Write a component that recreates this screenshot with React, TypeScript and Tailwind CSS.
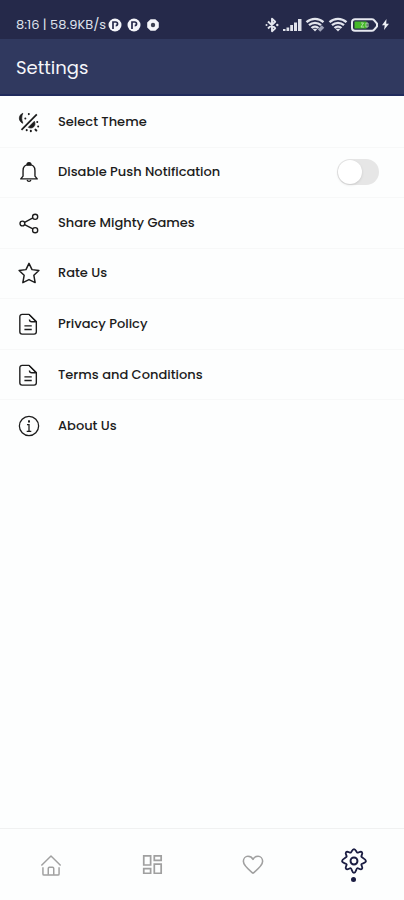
import React from 'react';

type IconProps = { className?: string };

const StatusBadge: React.FC<IconProps> = ({ className }) => (
  <svg viewBox="0 0 14 14" className={className} aria-hidden="true">
    <circle cx="7" cy="7" r="6.500" fill="#f4f5fa" />
    <path d="M5 11V4h2.700a1.800 1.800 0 0 1 0 3.700" fill="none" stroke="#25294a" strokeWidth="1.700" />
  </svg>
);

const StatusDot: React.FC<IconProps> = ({ className }) => (
  <svg viewBox="0 0 14 14" className={className} aria-hidden="true">
    <path d="M4.600 1.200h4.800l3.400 3.400v4.800l-3.400 3.400H4.600L1.200 9.400V4.600z" fill="#f4f5fa" />
    <circle cx="7" cy="7" r="2.200" fill="#3d4153" />
  </svg>
);

const BluetoothIcon: React.FC<IconProps> = ({ className }) => (
  <svg viewBox="0 0 14 16" className={className} fill="none" stroke="#e3e5ed" strokeWidth="1.900" strokeLinejoin="round" aria-hidden="true">
    <path d="m3 4.500 7.200 6.700L7 14.200V1.800l3.200 3L3 11.500" />
    <circle cx="1.500" cy="8" r="1" fill="#e3e5ed" stroke="none" />
    <circle cx="12.300" cy="8" r="1.200" fill="#e3e5ed" stroke="none" />
  </svg>
);

const SignalIcon: React.FC<IconProps> = ({ className }) => (
  <svg viewBox="0 0 20 14" className={className} fill="#dfe1ea" aria-hidden="true">
    <rect x="1" y="11" width="2.500" height="2" />
    <rect x="4.500" y="9.500" width="2.700" height="3.500" />
    <rect x="8.200" y="7" width="2.800" height="6" />
    <rect x="12" y="4.500" width="3" height="8.500" />
    <rect x="16" y="1" width="3.500" height="12" />
  </svg>
);

const WifiIcon: React.FC<IconProps & { linked?: boolean }> = ({ className, linked }) => (
  <svg viewBox="0 0 19 15" className={className} fill="none" stroke="#e3e5ed" strokeWidth="2.300" aria-hidden="true">
    <path d="M1 5.200c5-4.500 12-4.500 17 0M3.500 8.200c3.500-3.100 8.500-3.100 12 0M6 11c2-1.800 5-1.800 7 0" />
    <path d="M7 11.800h5l-2.500 2.700z" fill="#e3e5ed" stroke="none" />
    {linked && <path d="m13.500 13.500 4-4" stroke="#9fa3b8" strokeWidth="3.500" />}
  </svg>
);

const BatteryIcon: React.FC<IconProps> = ({ className }) => (
  <svg viewBox="0 0 27 14" className={className} aria-hidden="true">
    <path d="M4 1.200h17c1.500 0 2 .5 2.500 1.500l2.500 3v2.600l-2.500 3c-.5 1-1 1.500-2.500 1.500H4a3 3 0 0 1-3-3V4.200a3 3 0 0 1 3-3z" fill="#25294a" stroke="#e6e8ef" strokeWidth="2" />
    <path d="M3.500 3.500h12v7h-12z" fill="#45b929" />
    <path d="M10 5h2.500L10 9h3M15 5h2v4h-2z" fill="none" stroke="#b8e0b0" strokeWidth=".9" />
  </svg>
);

const BoltIcon: React.FC<IconProps> = ({ className }) => (
  <svg viewBox="0 0 9 13" className={className} fill="#eef0f5" aria-hidden="true">
    <path d="M5.500 1 1 7.300h2.700L3 12l5-6.200H5.200z" />
  </svg>
);

const ThemeIcon: React.FC<IconProps> = ({ className }) => (
  <svg viewBox="0 0 24 24" className={className} fill="none" stroke="currentColor" aria-hidden="true">
    <path d="M3.800 20.500 20.500 3.800" strokeWidth="1.900" />
    <path d="M5.200 2.500C.8 4.500.2 9.700 4 12.800c.4.300.900.5 1.300.500C3.700 10 3.600 6 5.200 2.500z" fill="currentColor" strokeWidth=".8" />
    <path d="M17.800 11.300c1.200 2 .9 4.400-.6 5.900s-3.900 1.800-5.900.6z" fill="currentColor" strokeWidth=".8" />
    <path d="M8 8.200v.100M11.800 3.300v.100M21 12v.100M22 16.800v.100M19 20.300l1 1M14 21.500v.500M9.500 20.800v.100" strokeWidth="2.200" strokeLinecap="round" />
  </svg>
);

const BellIcon: React.FC<IconProps> = ({ className }) => (
  <svg viewBox="0 0 24 24" className={className} fill="none" stroke="currentColor" strokeWidth="1.500" strokeLinejoin="round" aria-hidden="true">
    <path d="M5.500 16.500v-6C5.500 6.500 8 4 12 4s6.500 2.500 6.500 6.500v6l2.500 3H3z" />
    <path d="M9.800 4.300C9.800 1 14.200 1 14.200 4.300z" fill="currentColor" />
    <path d="M10 20.500c.400 2.300 3.600 2.300 4 0" />
  </svg>
);

const ShareIcon: React.FC<IconProps> = ({ className }) => (
  <svg viewBox="0 0 24 24" className={className} fill="none" stroke="currentColor" strokeWidth="1.500" aria-hidden="true">
    <circle cx="4.800" cy="12.500" r="2.600" />
    <circle cx="18.700" cy="5.200" r="2.800" />
    <circle cx="18.700" cy="19.800" r="2.800" />
    <path d="m7.200 11.200 9-4.700M7.200 13.800l9 4.700" />
  </svg>
);

const StarIcon: React.FC<IconProps> = ({ className }) => (
  <svg viewBox="0 0 24 24" className={className} fill="none" stroke="currentColor" strokeWidth="1.600" strokeLinejoin="round" aria-hidden="true">
    <path d="M12 1.500 15.300 8.300l7.500 1-5.500 5.200 1.400 8L12 19.200 5.300 22.500l1.400-8L1.200 9.300l7.500-1z" />
  </svg>
);

const DocumentIcon: React.FC<IconProps> = ({ className }) => (
  <svg viewBox="0 0 24 24" className={className} fill="none" stroke="currentColor" strokeWidth="1.500" strokeLinejoin="round" aria-hidden="true">
    <path d="M12 1.500H4.500A2.500 2.500 0 0 0 2 4v16.500A2.500 2.500 0 0 0 4.500 23h13a2.500 2.500 0 0 0 2.500-2.500v-11z" />
    <path d="M12 1.500 20 9.500h-5A2.500 2.500 0 0 1 12.500 7M7 14h8M7 18h8" />
  </svg>
);

const InfoIcon: React.FC<IconProps> = ({ className }) => (
  <svg viewBox="0 0 24 24" className={className} fill="none" stroke="currentColor" strokeWidth="1.400" aria-hidden="true">
    <circle cx="12" cy="12" r="10.500" />
    <path d="M12 5.800v2.400" strokeWidth="2.200" />
    <path d="M9.800 10.500H12V17.500M9.500 17.800h5" />
  </svg>
);

const HomeIcon: React.FC<IconProps> = ({ className }) => (
  <svg viewBox="0 0 24 24" className={className} fill="none" stroke="currentColor" strokeWidth="1.600" strokeLinejoin="round" aria-hidden="true">
    <path d="M1.500 12.500 12 2.200l10.500 10.300" />
    <path d="M3.200 14.500v7.300c0 .8.500 1.200 1.200 1.200h15.200c.7 0 1.200-.4 1.200-1.200v-7.300" />
    <path d="M9 22.500v-6.700c0-.8.500-1.300 1.300-1.300h3.400c.8 0 1.300.5 1.300 1.300v6.700" />
  </svg>
);

const DashboardIcon: React.FC<IconProps> = ({ className }) => (
  <svg viewBox="0 0 24 24" className={className} fill="none" stroke="currentColor" strokeWidth="1.900" aria-hidden="true">
    <path d="M3 2h7.500v10H3zM14.500 2H22v5h-7.500zM3 16h7.500v5H3zM14.500 11H22v10h-7.500z" />
  </svg>
);

const HeartIcon: React.FC<IconProps> = ({ className }) => (
  <svg viewBox="0 0 24 24" className={className} fill="none" stroke="currentColor" strokeWidth="1.700" strokeLinejoin="round" aria-hidden="true">
    <path d="M12 21C8.500 18 1.500 13 1.500 8c0-3.300 2.300-5.500 5-5.500C9 2.500 11 3.800 12 5.800c1-2 3-3.300 5.500-3.300 2.700 0 5 2.200 5 5.500 0 5-7 10-10.500 13z" />
  </svg>
);

const GearIcon: React.FC<IconProps> = ({ className }) => (
  <svg viewBox="0 0 24 24" className={className} fill="none" stroke="currentColor" strokeWidth="1.700" strokeLinejoin="round" aria-hidden="true">
    <path d="M9 4.300C10 3.900 10.200 1 12 1s2 2.900 3 3.300 3-1.800 4.300-.5-.9 3.200-.500 4.200S23 10 23 12s-3.800 2-4.200 3 1.800 3 .500 4.300-3.300-1-4.300-.600S13.800 23 12 23s-2-3.900-3-4.300-3 1.900-4.300.6.900-3.300.500-4.300S1 14 1 12s3.800-3 4.200-4-1.800-2.900-.5-4.200S8 4.700 9 4.300z" />
    <circle cx="12" cy="12" r="3.200" strokeWidth="1.800" />
  </svg>
);

const settings = [
  { id: 'theme', label: 'Select Theme', Icon: ThemeIcon },
  { id: 'push', label: 'Disable Push Notification', Icon: BellIcon, toggle: true },
  { id: 'share', label: 'Share Mighty Games', Icon: ShareIcon },
  { id: 'rate', label: 'Rate Us', Icon: StarIcon },
  { id: 'privacy', label: 'Privacy Policy', Icon: DocumentIcon },
  { id: 'terms', label: 'Terms and Conditions', Icon: DocumentIcon },
  { id: 'about', label: 'About Us', Icon: InfoIcon },
];

const tabs = [
  { id: 'home', label: 'Home', Icon: HomeIcon },
  { id: 'categories', label: 'Categories', Icon: DashboardIcon },
  { id: 'favourites', label: 'Favourites', Icon: HeartIcon },
];

const StatusBar = () => (
  <div className="h-[39px] bg-[#25294a] pt-[10px] pl-4 pr-[14px] flex items-center justify-between text-[#dfe1ea]">
    <div className="flex items-center gap-[2px]">
      <span className="text-[13px] leading-4 whitespace-nowrap">8:16 | 58.9KB/s</span>
      <div className="flex items-center gap-[5px]">
        <StatusBadge className="w-[14px] h-[14px]" />
        <StatusBadge className="w-[14px] h-[14px]" />
        <StatusDot className="w-[14px] h-[14px]" />
      </div>
    </div>
    <div className="flex items-center gap-[3px]">
      <BluetoothIcon className="w-[14px] h-4" />
      <SignalIcon className="w-5 h-[14px]" />
      <WifiIcon className="w-5 h-[15px]" linked />
      <WifiIcon className="w-5 h-[15px]" />
      <BatteryIcon className="w-[27px] h-[14px]" />
      <BoltIcon className="w-[9px] h-[13px]" />
    </div>
  </div>
);

const App: React.FC = () => {
  return (
    <div className="min-h-screen flex flex-col bg-[#fdfefe] font-['Poppins','Inter',sans-serif] text-[#1c1c1c]">
      <StatusBar />
      <header className="h-[57px] bg-[#30395f] border-b-2 border-[#202b5c] pt-[2px] px-4 flex items-center">
        <h1 className="text-[18px] leading-7 text-[#f5f6fa]">Settings</h1>
      </header>

      <main className="flex-1 pt-px">
        <ul className="grid auto-rows-fr h-[354px]">
          {settings.map(({ id, label, Icon, toggle }) => (
            <li key={id} className="border-b border-[#f7f8f8] last:border-b-0 flex">
              {toggle ? (
                <label htmlFor={id} className="flex-1 flex items-center pl-[18px] pr-[25px] cursor-pointer">
                  <Icon className="w-[22px] h-[22px] mr-[18px]" />
                  <span className="flex-1 text-[13px] leading-5 font-medium">{label}</span>
                  <input
                    id={id}
                    type="checkbox"
                    role="switch"
                    className="appearance-none w-[42px] h-[26px] rounded-full bg-[#e6e6e6] p-px flex items-center cursor-pointer before:content-[''] before:w-6 before:h-6 before:rounded-full before:bg-white before:shadow checked:justify-end checked:bg-[#30395f]"
                  />
                </label>
              ) : (
                <button type="button" className="flex-1 flex items-center pl-[18px] pr-[25px] text-left cursor-pointer">
                  <Icon className="w-[22px] h-[22px] mr-[18px]" />
                  <span className="text-[13px] leading-5 font-medium">{label}</span>
                </button>
              )}
            </li>
          ))}
        </ul>
      </main>

      <nav className="h-[72px] border-t border-[#f0f1f1] grid grid-cols-4">
        {tabs.map(({ id, label, Icon }) => (
          <button key={id} type="button" aria-label={label} className="flex items-center justify-center text-[#a0a0a0] cursor-pointer">
            <Icon className="w-[22px] h-[22px]" />
          </button>
        ))}
        <button type="button" aria-label="Settings" aria-current="page" className="flex flex-col items-center justify-center gap-[3px] text-[#1b1d42] cursor-pointer">
          <GearIcon className="w-[26px] h-[26px]" />
          <span className="w-[5px] h-[5px] rounded-full bg-current" />
        </button>
      </nav>
    </div>
  );
};

export default App;
